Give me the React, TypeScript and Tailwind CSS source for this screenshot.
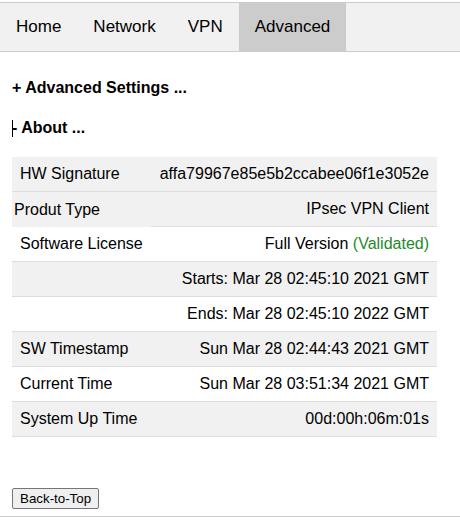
const TABS = [
  { label: "Home", active: false },
  { label: "Network", active: false },
  { label: "VPN", active: false },
  { label: "Advanced", active: true },
];

type Row = { label: string; value: React.ReactNode; gray: boolean };

const ROWS: Row[] = [
  { label: "HW Signature", value: "affa79967e85e5b2ccabee06f1e3052e", gray: true },
  {
    label: "Software License",
    value: (
      <>
        Full Version <span className="text-[#1f8a2c]">(Validated)</span>
      </>
    ),
    gray: false,
  },
  { label: "", value: "Starts: Mar 28 02:45:10 2021 GMT", gray: true },
  { label: "", value: "Ends: Mar 28 02:45:10 2022 GMT", gray: false },
  { label: "SW Timestamp", value: "Sun Mar 28 02:44:43 2021 GMT", gray: true },
  { label: "Current Time", value: "Sun Mar 28 03:51:34 2021 GMT", gray: false },
  { label: "System Up Time", value: "00d:00h:06m:01s", gray: true },
];

function InfoRow({ label, value, gray }: Row) {
  return (
    <div
      className={`flex h-[35px] items-center justify-between border-b border-[#dddddd] px-2 ${
        gray ? "bg-[#f1f1f1]" : "bg-white"
      }`}
    >
      <span>{label}</span>
      <span>{value}</span>
    </div>
  );
}

export default function App() {
  return (
    <div
      className="h-[521px] w-[460px] bg-white pt-[2px] text-black"
      style={{ fontFamily: '"Liberation Sans", Arial, sans-serif' }}
    >
      {/* Top bar */}
      <nav className="flex h-[50px] border-y border-[#cccccc] bg-[#f1f1f1] text-[17px]">
        {TABS.map(({ label, active }) => (
          <a
            key={label}
            className={`flex items-center px-4 ${active ? "bg-[#cccccc]" : ""}`}
          >
            {label}
          </a>
        ))}
      </nav>

      <div className="px-3">
        <p className="mt-[27px] h-[18px] text-[16px] font-bold leading-[18px]">
          + Advanced Settings ...
        </p>
        <p className="mt-[22px] flex h-[18px] items-center text-[16px] font-bold leading-[18px]">
          <span className="mr-[-1px] inline-block h-[17px] w-px bg-black" />- About ...
        </p>

        {/* About table */}
        <div className="mt-[20px] w-[425px] text-[16px] leading-[18px]">
          <InfoRow {...ROWS[0]} />
          <div className="flex h-[35px] bg-[#f1f1f1]">
            <div className="flex w-[139px] items-center pl-[2px]">Produt Type</div>
            <div className="flex flex-1 items-center justify-end border-b border-[#dddddd] px-2">
              IPsec VPN Client
            </div>
          </div>
          {ROWS.slice(1).map((r, i) => (
            <InfoRow key={i} {...r} />
          ))}
        </div>

        <button className="mt-[51px] h-[21px] rounded-[2px] border border-[#767676] bg-[#efefef] px-[7px] text-[13.33px] leading-[15px]">
          Back-to-Top
        </button>
      </div>

      <div className="mt-[6px] h-px bg-[#cccccc]" />
    </div>
  );
}
